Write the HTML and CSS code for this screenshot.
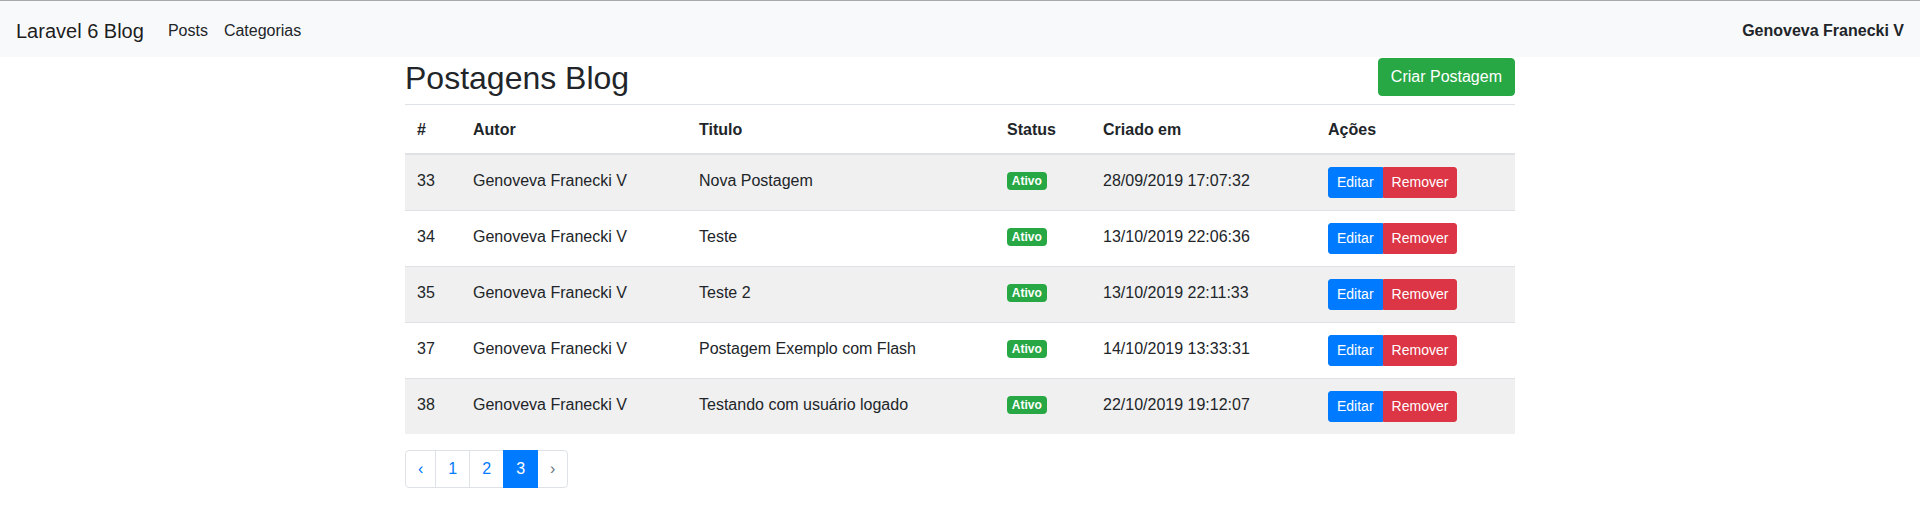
FILE: index.html
```html
<!DOCTYPE html>
<html lang="pt-BR">
<head>
<meta charset="utf-8">
<title>Laravel 6 Blog</title>
<link rel="stylesheet" href="styles.css">
</head>
<body>
<nav class="navbar">
  <a class="brand" href="#">Laravel 6 Blog</a>
  <ul class="nav">
    <li><a class="nav-link" href="#">Posts</a></li>
    <li><a class="nav-link" href="#">Categorias</a></li>
  </ul>
  <span class="user">Genoveva Franecki V</span>
</nav>

<main class="container">
  <div class="page-head">
    <h2 class="title">Postagens Blog</h2>
    <a class="btn btn-success" href="#">Criar Postagem</a>
  </div>

  <table class="table">
    <colgroup>
      <col class="c-id">
      <col class="c-autor">
      <col class="c-titulo">
      <col class="c-status">
      <col class="c-data">
      <col class="c-acoes">
    </colgroup>
    <thead>
      <tr>
        <th>#</th>
        <th>Autor</th>
        <th>Titulo</th>
        <th>Status</th>
        <th>Criado em</th>
        <th>Ações</th>
      </tr>
    </thead>
    <tbody>
      <tr>
        <td>33</td>
        <td>Genoveva Franecki V</td>
        <td>Nova Postagem</td>
        <td><span class="badge">Ativo</span></td>
        <td>28/09/2019 17:07:32</td>
        <td class="actions"><div class="btn-group"><a class="btn-sm btn-primary" href="#">Editar</a><a class="btn-sm btn-danger" href="#">Remover</a></div></td>
      </tr>
      <tr>
        <td>34</td>
        <td>Genoveva Franecki V</td>
        <td>Teste</td>
        <td><span class="badge">Ativo</span></td>
        <td>13/10/2019 22:06:36</td>
        <td class="actions"><div class="btn-group"><a class="btn-sm btn-primary" href="#">Editar</a><a class="btn-sm btn-danger" href="#">Remover</a></div></td>
      </tr>
      <tr>
        <td>35</td>
        <td>Genoveva Franecki V</td>
        <td>Teste 2</td>
        <td><span class="badge">Ativo</span></td>
        <td>13/10/2019 22:11:33</td>
        <td class="actions"><div class="btn-group"><a class="btn-sm btn-primary" href="#">Editar</a><a class="btn-sm btn-danger" href="#">Remover</a></div></td>
      </tr>
      <tr>
        <td>37</td>
        <td>Genoveva Franecki V</td>
        <td>Postagem Exemplo com Flash</td>
        <td><span class="badge">Ativo</span></td>
        <td>14/10/2019 13:33:31</td>
        <td class="actions"><div class="btn-group"><a class="btn-sm btn-primary" href="#">Editar</a><a class="btn-sm btn-danger" href="#">Remover</a></div></td>
      </tr>
      <tr>
        <td>38</td>
        <td>Genoveva Franecki V</td>
        <td>Testando com usuário logado</td>
        <td><span class="badge">Ativo</span></td>
        <td>22/10/2019 19:12:07</td>
        <td class="actions"><div class="btn-group"><a class="btn-sm btn-primary" href="#">Editar</a><a class="btn-sm btn-danger" href="#">Remover</a></div></td>
      </tr>
    </tbody>
  </table>

  <ul class="pagination">
    <li class="page-item"><a class="page-link" href="#">&lsaquo;</a></li>
    <li class="page-item"><a class="page-link" href="#">1</a></li>
    <li class="page-item"><a class="page-link" href="#">2</a></li>
    <li class="page-item active"><span class="page-link">3</span></li>
    <li class="page-item disabled"><span class="page-link">&rsaquo;</span></li>
  </ul>
</main>
</body>
</html>
```

FILE: styles.css
```css
* { box-sizing: border-box; }

html, body {
  margin: 0;
  padding: 0;
  background: #fff;
}

body {
  font-family: "Liberation Sans", Arial, Helvetica, sans-serif;
  font-size: 16px;
  line-height: 1.5;
  color: #212529;
}

a { text-decoration: none; }

/* Navbar */
.navbar {
  display: flex;
  align-items: center;
  background: #f8f9fa;
  border-top: 1px solid #a9a9a9;
  padding: 10px 16px 6px;
  height: 57px;
}

.brand {
  font-size: 20px;
  line-height: 30px;
  padding: 5px 0;
  margin-right: 16px;
  color: rgba(0, 0, 0, 0.9);
}

.nav {
  display: flex;
  list-style: none;
  margin: 0;
  padding: 0;
}

.nav-link {
  display: block;
  padding: 8px 8px;
  line-height: 24px;
  color: #212529;
}

.user {
  margin-left: auto;
  font-weight: 700;
  line-height: 24px;
  color: #212529;
}

/* Main container */
.container {
  width: 1110px;
  margin: 0 auto;
}

.page-head {
  display: flex;
  justify-content: space-between;
  align-items: flex-start;
  padding-top: 1px;
}

.title {
  margin: 1px 0 7px;
  font-size: 32px;
  line-height: 38px;
  font-weight: 400;
  color: #212529;
}

.btn {
  display: inline-block;
  font-size: 16px;
  line-height: 24px;
  padding: 6px 12px;
  border: 1px solid transparent;
  border-radius: 4px;
  color: #fff;
}

.btn-success {
  background: #28a745;
  border-color: #28a745;
}

/* Table */
.table {
  width: 100%;
  table-layout: fixed;
  border-collapse: separate;
  border-spacing: 0;
  margin-bottom: 16px;
}

.c-id { width: 56px; }
.c-autor { width: 226px; }
.c-titulo { width: 308px; }
.c-status { width: 96px; }
.c-data { width: 225px; }
.c-acoes { width: 199px; }

.table th {
  text-align: left;
  font-weight: 700;
  line-height: 24px;
  padding: 13px 12px 11px;
  border-top: 1px solid #dee2e6;
  border-bottom: 2px solid #dee2e6;
  vertical-align: bottom;
}

.table td {
  line-height: 24px;
  padding: 14px 12px 10px;
  border-top: 1px solid #dee2e6;
  vertical-align: top;
  white-space: nowrap;
}

.table tbody tr:first-child td {
  border-top: 0;
}

.table tbody tr:nth-of-type(odd) {
  background: #f0f0f0;
}

.table td.actions {
  padding: 12px;
}

.badge {
  display: inline-block;
  font-size: 12px;
  font-weight: 700;
  line-height: 1;
  padding: 3px 4.8px;
  border-radius: 4px;
  background: #28a745;
  color: #fff;
  vertical-align: 1px;
}

.btn-group {
  display: inline-flex;
  vertical-align: top;
}

.btn-sm {
  display: inline-block;
  font-size: 14px;
  line-height: 21px;
  padding: 4px 8px;
  border: 1px solid transparent;
  color: #fff;
}

.btn-group .btn-sm:first-child {
  border-radius: 3px 0 0 3px;
}

.btn-group .btn-sm:last-child {
  border-radius: 0 3px 3px 0;
}

.btn-primary {
  background: #007bff;
  border-color: #007bff;
}

.btn-danger {
  background: #dc3545;
  border-color: #dc3545;
}

/* Pagination */
.pagination {
  display: flex;
  list-style: none;
  margin: 0;
  padding: 0;
}

.page-link {
  display: block;
  padding: 8px 12px;
  line-height: 20px;
  font-size: 16px;
  color: #007bff;
  background: #fff;
  border: 1px solid #dee2e6;
  margin-left: -1px;
  position: relative;
}

.page-item:first-child .page-link {
  margin-left: 0;
  border-radius: 4px 0 0 4px;
}

.page-item:last-child .page-link {
  border-radius: 0 4px 4px 0;
}

.page-item.active .page-link {
  z-index: 1;
  color: #fff;
  background: #007bff;
  border-color: #007bff;
}

.page-item.disabled .page-link {
  color: #6c757d;
}
```
